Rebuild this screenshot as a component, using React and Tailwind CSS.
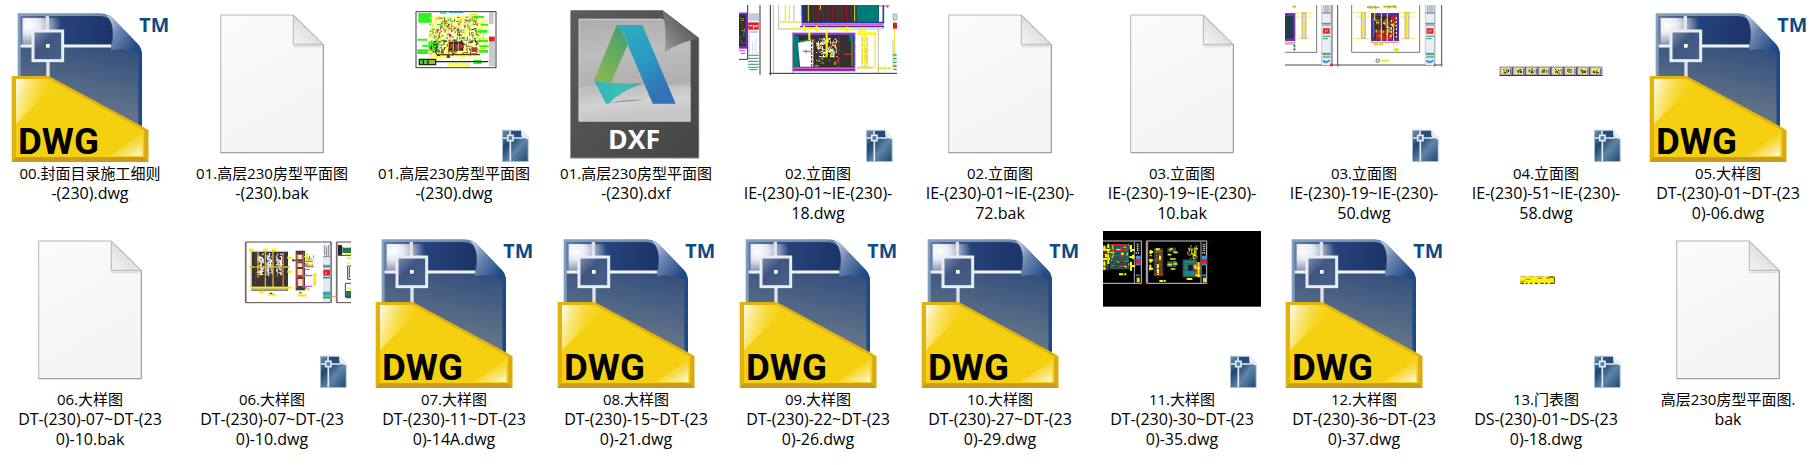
import clsx from "clsx";

const files = [
  { icon: "dwg", lines: ["00.封面目录施工细则", "-(230).dwg"] },
  { icon: "bak", lines: ["01.高层230房型平面图", "-(230).bak"] },
  { icon: "plan", lines: ["01.高层230房型平面图", "-(230).dwg"] },
  { icon: "dxf", lines: ["01.高层230房型平面图", "-(230).dxf"] },
  { icon: "elevationA", lines: ["02.立面图", "IE-(230)-01~IE-(230)-", "18.dwg"] },
  { icon: "bak", lines: ["02.立面图", "IE-(230)-01~IE-(230)-", "72.bak"] },
  { icon: "bak", lines: ["03.立面图", "IE-(230)-19~IE-(230)-", "10.bak"] },
  { icon: "elevationB", lines: ["03.立面图", "IE-(230)-19~IE-(230)-", "50.dwg"] },
  { icon: "strip", lines: ["04.立面图", "IE-(230)-51~IE-(230)-", "58.dwg"] },
  { icon: "dwg", lines: ["05.大样图", "DT-(230)-01~DT-(23", "0)-06.dwg"] },
  { icon: "bak", lines: ["06.大样图", "DT-(230)-07~DT-(23", "0)-10.bak"] },
  { icon: "detail", lines: ["06.大样图", "DT-(230)-07~DT-(23", "0)-10.dwg"] },
  { icon: "dwg", lines: ["07.大样图", "DT-(230)-11~DT-(23", "0)-14A.dwg"] },
  { icon: "dwg", lines: ["08.大样图", "DT-(230)-15~DT-(23", "0)-21.dwg"] },
  { icon: "dwg", lines: ["09.大样图", "DT-(230)-22~DT-(23", "0)-26.dwg"] },
  { icon: "dwg", lines: ["10.大样图", "DT-(230)-27~DT-(23", "0)-29.dwg"] },
  { icon: "dark", lines: ["11.大样图", "DT-(230)-30~DT-(23", "0)-35.dwg"] },
  { icon: "dwg", lines: ["12.大样图", "DT-(230)-36~DT-(23", "0)-37.dwg"] },
  { icon: "doors", lines: ["13.门表图", "DS-(230)-01~DS-(23", "0)-18.dwg"] },
  { icon: "bak", lines: ["高层230房型平面图.", "bak"] },
];

// Gradients shared by all the icons
function IconDefs() {
  return (
    <svg className="absolute h-0 w-0" aria-hidden="true">
      <defs>
        <linearGradient id="body" x1="0.6" y1="0" x2="0.4" y2="1">
          <stop offset="0" stopColor="#1f3b72" />
          <stop offset="0.3" stopColor="#3b557f" />
          <stop offset="0.75" stopColor="#5f7188" />
          <stop offset="1" stopColor="#6e7e90" />
        </linearGradient>
        <linearGradient id="rim" x1="0" y1="0" x2="1" y2="0.3">
          <stop offset="0" stopColor="#84a0bf" />
          <stop offset="0.6" stopColor="#6f8fb5" />
          <stop offset="1" stopColor="#1b4a84" />
        </linearGradient>
        <linearGradient id="topBand" x1="0" y1="0" x2="1" y2="0">
          <stop offset="0" stopColor="#6c7fa6" />
          <stop offset="0.45" stopColor="#26427a" />
          <stop offset="1" stopColor="#1b3468" />
        </linearGradient>
        <radialGradient id="glow">
          <stop offset="0" stopColor="#fff" />
          <stop offset="0.35" stopColor="#fff" stopOpacity="0.85" />
          <stop offset="1" stopColor="#fff" stopOpacity="0" />
        </radialGradient>
        <linearGradient id="target" x1="0" y1="0" x2="1" y2="1">
          <stop offset="0" stopColor="#7f8eb0" />
          <stop offset="0.4" stopColor="#3f5682" />
          <stop offset="1" stopColor="#4a6188" />
        </linearGradient>
        <linearGradient id="curl" x1="0" y1="0.2" x2="0.8" y2="0.8">
          <stop offset="0" stopColor="#b9c4da" />
          <stop offset="0.4" stopColor="#6a83ae" />
          <stop offset="1" stopColor="#214b85" />
        </linearGradient>
        <linearGradient id="shineLeft" x1="0" y1="0" x2="1" y2="0.35">
          <stop offset="0" stopColor="#fff" stopOpacity="0.95" />
          <stop offset="0.5" stopColor="#fdf0a0" stopOpacity="0.4" />
          <stop offset="1" stopColor="#f4d010" stopOpacity="0" />
        </linearGradient>
        <linearGradient id="shineRight" x1="1" y1="1" x2="0.3" y2="0.1">
          <stop offset="0" stopColor="#fff" stopOpacity="0.95" />
          <stop offset="1" stopColor="#f4d010" stopOpacity="0" />
        </linearGradient>
        <linearGradient id="paper" x1="0" y1="0" x2="0.4" y2="1">
          <stop offset="0" stopColor="#fbfbfc" />
          <stop offset="1" stopColor="#f3f4f6" />
        </linearGradient>
        <linearGradient id="paperFold" x1="0" y1="1" x2="0.6" y2="0.4">
          <stop offset="0" stopColor="#f4f4f4" />
          <stop offset="1" stopColor="#dcdcdc" />
        </linearGradient>
        <linearGradient id="frame" x1="0" y1="0" x2="1" y2="1">
          <stop offset="0" stopColor="#5c5c5c" />
          <stop offset="1" stopColor="#454545" />
        </linearGradient>
        <linearGradient id="panel" x1="0" y1="0" x2="0.1" y2="1">
          <stop offset="0" stopColor="#adadad" />
          <stop offset="0.35" stopColor="#bdbdbd" />
          <stop offset="0.7" stopColor="#b0b0b0" />
          <stop offset="0.85" stopColor="#d0d0d0" />
          <stop offset="1" stopColor="#bcbcbc" />
        </linearGradient>
        <linearGradient id="dxfFold" x1="0" y1="1" x2="0.7" y2="0.4">
          <stop offset="0" stopColor="#a0a0a0" />
          <stop offset="0.5" stopColor="#7c7c7c" />
          <stop offset="1" stopColor="#606060" />
        </linearGradient>
        <linearGradient id="legRight" x1="0" y1="0" x2="0.5" y2="1">
          <stop offset="0" stopColor="#2bb0c0" />
          <stop offset="0.5" stopColor="#2a9cc4" />
          <stop offset="1" stopColor="#3470b4" />
        </linearGradient>
        <linearGradient id="legLeft" x1="1" y1="0" x2="0.3" y2="1">
          <stop offset="0" stopColor="#3f9a78" />
          <stop offset="0.5" stopColor="#64ac62" />
          <stop offset="1" stopColor="#8ab450" />
        </linearGradient>
        <linearGradient id="legFoot" x1="0" y1="0" x2="1" y2="0">
          <stop offset="0" stopColor="#36b0b4" />
          <stop offset="0.5" stopColor="#3cc0b8" />
          <stop offset="1" stopColor="#5a9c98" />
        </linearGradient>
        <linearGradient id="badge" x1="0" y1="0" x2="1" y2="1">
          <stop offset="0" stopColor="#6f90ae" />
          <stop offset="0.3" stopColor="#1d4674" />
          <stop offset="0.6" stopColor="#6184a6" />
          <stop offset="1" stopColor="#1d4a7a" />
        </linearGradient>
      </defs>
    </svg>
  );
}

function Canvas({ origin = "0 0", children }) {
  return (
    <svg viewBox={`${origin} 480 477`} className="h-[159px] w-40" aria-hidden="true">
      {children}
    </svg>
  );
}

// Scattered marks that read as dense CAD line work at thumbnail size
function Specks({ x, y, w, h, n, colors, seed = 1, max = 12, min = 3 }) {
  let s = seed * 7919;
  const next = () => {
    s = (s * 16807) % 2147483647;
    return s / 2147483647;
  };
  next();
  return Array.from({ length: n }, (_, i) => {
    const long = min + next() * (max - min);
    const flat = next() > 0.5;
    return (
      <rect
        key={i}
        x={Math.round(x + next() * (w - (flat ? long : 3)))}
        y={Math.round(y + next() * (h - (flat ? 3 : long)))}
        width={flat ? Math.round(long) : 3}
        height={flat ? 3 : Math.round(long)}
        fill={colors[i % colors.length]}
      />
    );
  });
}

function Badge({ x, y }) {
  return (
    <g transform={`translate(${x} ${y})`}>
      <path d="M0 0H58L80 24V97H0Z" fill="#a9bccd" />
      <path d="M3 4H57L77 28V94H3Z" fill="url(#badge)" />
      <path d="M28 5H56L60 24H28Z" fill="#234d7b" />
      <path d="M58 0Q56 20 62 26Q72 26 80 30V24Z" fill="#e8eef3" />
      <path d="M24 4V16M25 34V94M3 25H15M34 25H62" stroke="#e4ecf3" strokeWidth="5" />
      <rect x="17" y="17" width="16" height="16" fill="#5b7da1" stroke="#e4ecf3" strokeWidth="5" />
    </g>
  );
}

function DwgIcon() {
  return (
    <Canvas origin="30 12">
      <path d="M53 40H300Q328 40 344 60L414 133Q426 146 426 170V400H53Z" fill="url(#rim)" />
      <path d="M62 49H300Q324 49 340 66L405 138Q416 150 416 172V390H62Z" fill="url(#body)" />
      <path d="M62 49H300Q350 62 332 133H62Z" fill="url(#topBand)" />
      <clipPath id="glowClip">
        <path d="M68 54H230V230H68Z" />
      </clipPath>
      <ellipse cx="88" cy="76" rx="95" ry="72" fill="url(#glow)" clipPath="url(#glowClip)" />
      <path d="M416 200V390H426V170Q426 150 418 140Z" fill="#1d4b86" />
      <path d="M318 46Q350 72 333 151Q392 138 426 172Q426 146 414 133L344 60Q332 46 318 46Z" fill="url(#curl)" />
      <path d="M142 48V92M144 182V240" stroke="#dfe4ec" strokeWidth="10" />
      <path d="M62 138H96M190 138H334" stroke="#eef1f6" strokeWidth="9" />
      <rect x="99" y="93" width="89" height="89" fill="url(#target)" stroke="#e9edf4" strokeWidth="9" />
      <rect x="138" y="132" width="11" height="11" fill="#fff" />
      <path d="M35 228H146L426 379L445 390V486H35Z" fill="#e2b30c" />
      <path d="M48 237H146L433 392V472H48Z" fill="#f4d010" />
      <path d="M48 237H144L170 252L48 372Z" fill="url(#shineLeft)" />
      <path d="M330 468L427 400V468Z" fill="url(#shineRight)" />
      <path d="M35 486L48 472H433L445 486Z" fill="#c99a1e" />
      <path d="M433 392L445 390V486L433 472Z" fill="#d9aa14" />
      <text x="54" y="461" className="fill-black font-['Roboto',sans-serif] text-[110px] font-bold">
        DWG
      </text>
      <text x="418" y="95" className="fill-[#0f4a84] font-['Open_Sans',sans-serif] text-[59px] font-bold">
        TM
      </text>
    </Canvas>
  );
}

function BakIcon() {
  return (
    <Canvas origin="576 12">
      <path d="M662 45H880L970 133V458H662Z" fill="url(#paper)" stroke="#b4b4b4" strokeWidth="3" />
      <path d="M880 136L970 136L960 142H882Z" fill="#dedede" />
      <path d="M880 46V133H970Z" fill="url(#paperFold)" stroke="#b4b4b4" strokeWidth="3" />
      <path d="M970 134V458H662" fill="none" stroke="#9c9c9c" strokeWidth="3" />
    </Canvas>
  );
}

function DxfIcon() {
  return (
    <Canvas origin="588 12">
      <path d="M630 32H908L1018 115V477H630Z" fill="#3f3f3f" opacity="0.35" />
      <path d="M632 31H908L1016 113V473H632Z" fill="url(#frame)" />
      <path d="M656 56H908L992 122V365H656Z" fill="url(#panel)" />
      <path d="M656 262Q760 246 992 258V365H656Z" fill="#d4d4d4" opacity="0.4" />
      <path d="M656 56H908V60H659V362H656Z" fill="#d9d9d9" opacity="0.7" />
      <path d="M908 33Q922 100 914 156Q960 124 1018 116Z" fill="url(#dxfFold)" />
      <path d="M744 309Q800 296 852 300L780 306Z" fill="#686868" opacity="0.6" />
      <path d="M769 78Q785 80 803 134L752 250Q726 246 702 241Z" fill="url(#legLeft)" />
      <path d="M702 241Q760 254 850 250Q780 274 746 311H738Z" fill="url(#legFoot)" />
      <path d="M769 75H847L947 311H878L803 134Q792 86 769 78Z" fill="url(#legRight)" />
      <text x="744" y="447" className="fill-white font-['Open_Sans',sans-serif] text-[80px] font-bold">
        DXF
      </text>
    </Canvas>
  );
}

function PlanThumb() {
  return (
    <Canvas origin="42 12">
      <rect x="167" y="35" width="241" height="168" fill="#fff" />
      <path d="M205 45H360V58H385V92H360V110H385V150H355V172H250V180H205Z" fill="#ffff50" opacity="0.45" />
      <Specks x={195} y={42} w={185} h={135} n={110} colors={["#ffff00", "#fff04a", "#b8ff20"]} max={30} seed={3} />
      <path d="M175 39H215V68H175ZM340 48H372V54H340ZM352 90H382V98H352ZM172 116H202V122H172ZM172 148H204V162H172ZM340 180H365V192H340ZM358 136H386V142H358ZM206 126H236V152H206ZM352 120H384V126H352ZM186 134H206V140H186ZM362 72H384V77H362ZM356 150H384V158H356Z" fill="#30f020" />
      <Specks x={206} y={50} w={150} h={118} n={130} colors={["#0aa070", "#38d820", "#8c7010", "#e08020", "#fff"]} seed={8} max={13} />
      <Specks x={222} y={58} w={134} h={60} n={75} colors={["#404040", "#e04a28", "#2668b0", "#ff9030", "#c030a0"]} seed={12} max={11} />
      <Specks x={210} y={118} w={148} h={50} n={90} colors={["#303030", "#cf3520", "#2a7060", "#201818", "#8a3f20"]} seed={29} max={13} />
      <rect x="266" y="126" width="44" height="26" fill="#36291f" />
      <path d="M270 132H278V146H270ZM286 133H294V148H286ZM300 132H308V145H300ZM334 142H352V156H334Z" fill="#bd392d" />
      <path d="M280 128V150M296 128V150" stroke="#c9c4b8" strokeWidth="3" />
      <path d="M235 162H360V166H270V174H260V166H235Z" fill="#684015" />
      <path d="M268 36H310V40H268ZM240 37H260V41H240Z" fill="#38c8f0" />
      <path d="M387 37H401V72H387ZM387 110H405V198H387Z" fill="#c9c9cf" />
      <path d="M387 110H404V124H387Z" fill="#e02020" />
      <path d="M262 188H330V199H262Z" fill="#ffff40" />
      <path d="M178 178H204V194H178Z" fill="#48d030" />
      <path d="M204 178H227V194H204Z" fill="#a8b030" />
      <path d="M178 178H227V194H178ZM204 178V194M190 178V194M227 185H385" fill="none" stroke="#173010" strokeWidth="4" />
      <rect x="168" y="35" width="240" height="168" fill="none" stroke="#44313a" strokeWidth="3" />
      <Badge x={426} y={389} />
    </Canvas>
  );
}

function ElevationAThumb() {
  return (
    <Canvas origin="54 12">
      <rect x="57" y="38" width="25" height="108" fill="#7a2cc0" />
      <rect x="57" y="44" width="20" height="94" fill="#263228" />
      <Specks x={58} y={46} w={18} h={88} n={22} colors={["#908830", "#175c50", "#8d2b28"]} seed={5} />
      <path d="M57 152H75M62 160H76" stroke="#e060e0" strokeWidth="4" />
      <path d="M57 178H83V15M120 15V225" fill="none" stroke="#323232" strokeWidth="3" />
      <path d="M86 40H117V62H86ZM88 92H113V99H88Z" fill="#b9cfde" />
      <rect x="85" y="67" width="31" height="22" fill="#e01c25" />
      <path d="M89 77H97M101 75V85M106 78H113" stroke="#fff" strokeWidth="4" />
      <path d="M88 103V160M98 125V162M108 115V162" stroke="#9ec5ed" strokeWidth="2" />
      <path d="M84 166H116M84 175H116M84 184H116M84 193H116M84 202H116M88 209H112" stroke="#58a69a" strokeWidth="4" />
      <path d="M151 15V226M148 220H531" stroke="#30202a" strokeWidth="3" />
      <path d="M160 15V220M176 15V87H490V70M475 88V220M222 15V66M244 15V45M218 96V220" fill="none" stroke="#969696" strokeWidth="2" />
      <path d="M178 66H244M196 15V66M208 15V66M413 103H472M465 94V204M434 103V205M524 40V205" stroke="#f4e848" strokeWidth="4" />
      <rect x="247" y="15" width="230" height="52" fill="#343230" />
      <rect x="410" y="15" width="66" height="51" fill="#007c78" />
      <path d="M268 15V65M280 15V65M296 15V65M310 15V65M324 15V65M338 15V65M352 15V65M366 15V65M380 15V65M394 15V65" stroke="#8c1826" strokeWidth="4" />
      <path d="M265 15V65M404 15V65M301 15V30" stroke="#d7e42e" strokeWidth="3" />
      <path d="M247 15V68H490V15" fill="none" stroke="#1841b0" strokeWidth="5" />
      <path d="M244 74H490" stroke="#e256bb" strokeWidth="6" />
      <path d="M240 80H492" stroke="#4b258f" strokeWidth="4" />
      <path d="M477 18H509M503 15V24" stroke="#bc4dc5" strokeWidth="3" />
      <rect x="218" y="98" width="188" height="116" fill="#8240c4" />
      <rect x="224" y="105" width="177" height="105" fill="#313230" />
      <path d="M219 108H236V204H219ZM388 105H400V122H388Z" fill="#008078" />
      <path d="M234 128L280 118V200H240Z" fill="#fff" />
      <path d="M236 126L280 118" stroke="#2b943e" strokeWidth="4" />
      <Specks x={288} y={114} w={65} h={60} n={85} colors={["#fff", "#f5ef9a", "#e7e7dd"]} seed={17} max={13} />
      <Specks x={280} y={110} w={78} h={94} n={42} colors={["#c92a2d", "#e4e520", "#925020"]} seed={19} max={12} />
      <path d="M275 120V204M357 110V204" stroke="#b12838" strokeWidth="4" strokeDasharray="8 4" />
      <path d="M248 154H275M258 148V160" stroke="#9b55b8" strokeWidth="3" />
      <path d="M370 163H394" stroke="#ef1d25" strokeWidth="4" />
      <path d="M396 122V198" stroke="#43a927" strokeWidth="4" />
      <path d="M220 205H404" stroke="#e65bc4" strokeWidth="5" />
      <path d="M216 85H234M250 87H300M345 88H400M252 78V96M290 78V96M320 84V170M380 80V96M410 100H462M417 93H432V112M268 92V120" fill="none" stroke="#ffff00" strokeWidth="6" />
      <path d="M427 110V202M441 110V202M411 203H460M470 205H512M438 145V185" fill="none" stroke="#ead52e" strokeWidth="5" strokeDasharray="15 2" />
      <path d="M519 42H531V60H519ZM519 118V204" fill="#c4dce8" stroke="#67a8bc" strokeWidth="2" />
      <path d="M519 68H531V86H519Z" fill="#d52032" />
      <path d="M520 165H530M520 176H530M520 187H530M520 198H530M520 208H530" stroke="#349780" strokeWidth="4" />
      <Badge x={438} y={389} />
    </Canvas>
  );
}

function TitleBlock({ x }) {
  return (
    <g transform={`translate(${x} 0)`}>
      <path d="M0 15H28V195H0Z" fill="#e8eff4" />
      <path d="M5 16H24V38H5Z" fill="#a8adb5" />
      <path d="M9 17V37M14 17V37M20 17V37" stroke="#e5e7e9" strokeWidth="2" />
      <path d="M0 39H28M0 70H28M2 75H26M1 160H28" stroke="#59799b" strokeWidth="3" />
      <path d="M1 82H28V103H1Z" fill="#d9d9df" />
      <path d="M4 85H24V101H4Z" fill="#eb1d1d" />
      <path d="M11 90V97M17 89V95" stroke="#fff" strokeWidth="2" />
      <path d="M3 109H26M3 116H19M3 164H26M3 171H26" stroke="#57a994" strokeWidth="4" />
      <path d="M4 181Q12 192 24 181" fill="none" stroke="#2895e0" strokeWidth="6" />
      <path d="M0 15V195M28 15V195" stroke="#acb3b9" strokeWidth="2" />
    </g>
  );
}

function ElevationBThumb() {
  return (
    <Canvas origin="612 12">
      <path d="M615 195H1086M756 15V199M773 15V199M1064 15V199M1085 15V199" stroke="#53444d" strokeWidth="3" />
      <path d="M710 15V157H615M815 15V157H1019V15" fill="none" stroke="#777" strokeWidth="3" />
      <rect x="615" y="39" width="31" height="84" fill="#7031c0" />
      <rect x="615" y="48" width="25" height="68" fill="#243b46" />
      <path d="M615 127H646M615 132H642" stroke="#e0a0a0" strokeWidth="4" />
      <path d="M643 130V153M639 138H648M639 148H648" stroke="#388f9e" strokeWidth="3" />
      <path d="M646 38H696M646 51H696M646 114H696M820 38H865M825 51H870M818 115H870M955 38H1008M955 51H1008M955 115H1010" stroke="#f3f25d" strokeWidth="3" />
      <path d="M666 39H678V116H666ZM844 38H856V116H844ZM975 38H987V116H975Z" fill="#ecd7b9" stroke="#ae9680" strokeWidth="2" />
      <path d="M671 65V100M849 42V58M849 75V105M981 42V105" stroke="#fff000" strokeWidth="6" strokeDasharray="12 3" />
      <path d="M861 22H898M910 20H950M638 20H648M870 17L875 26M884 17L888 26M924 17L928 25M942 15L947 25" stroke="#a5bc23" strokeWidth="5" />
      <rect x="873" y="39" width="84" height="84" fill="#5d29a9" />
      <rect x="881" y="48" width="68" height="69" fill="#372a32" />
      <path d="M888 92H940V119H888ZM932 49H948V72H932Z" fill="#c82426" />
      <path d="M881 52V112" stroke="#1b8f8c" strokeWidth="4" />
      <Specks x={887} y={52} w={55} h={66} n={70} colors={["#ad2936", "#c69339", "#62501f", "#3c2024"]} seed={4} />
      <Specks x={884} y={48} w={60} h={70} n={16} colors={["#ffff30", "#e4db25"]} seed={21} />
      <path d="M904 26V126M922 25V124M941 72V145M884 35V60" stroke="#fff51b" strokeWidth="3" />
      <path d="M949 52V118M934 60V116" stroke="#e8dcf2" strokeWidth="4" strokeDasharray="6 5" />
      <path d="M872 127H956" stroke="#ef92af" strokeWidth="4" />
      <path d="M881 132H895M898 131H910M943 149H956" stroke="#e2dc19" strokeWidth="9" />
      <circle cx="893" cy="182" r="5" fill="none" stroke="#44754a" strokeWidth="3" />
      <path d="M902 182H928" stroke="#f4ef15" strokeWidth="6" />
      <TitleBlock x={725} />
      <TitleBlock x={1036} />
      <path d="M750 195H758M771 195H775M1062 195H1066M1083 195H1087" stroke="#d33" strokeWidth="7" />
      <Badge x={996} y={389} />
    </Canvas>
  );
}

function StripThumb() {
  return (
    <Canvas origin="48 12">
      <rect x="149" y="200" width="308" height="28" fill="#665263" />
      {[151, 190, 228, 266, 305, 344, 383, 421].map((x, i) => (
        <g key={x}>
          <rect x={x} y="202" width="34" height="23" fill="#d3ccd1" />
          <rect x={x + 5} y="205" width="23" height="17" fill={i % 3 === 2 ? "#e0ed90" : "#f0ed65"} />
          <Specks x={x + 7} y={206} w={20} h={15} n={11} seed={i + 6} max={9} colors={["#45502d", "#38431f", "#aab735"]} />
          <path d={`M${x + 31} 206V222`} stroke="#51519a" strokeWidth="3" />
        </g>
      ))}
      <path d="M149 226H457" stroke="#4b174e" strokeWidth="3" />
      <Badge x={432} y={389} />
    </Canvas>
  );
}

function DetailThumb() {
  return (
    <Canvas origin="576 15">
      <path d="M1053 51H1010V233H1053M737 51H993V233H737Z" fill="#fff" stroke="#5d444c" strokeWidth="3" />
      <path d="M737 51V233M993 51V233M1010 51V233" stroke="#76706a" strokeWidth="5" />
      <rect x="754" y="80" width="110" height="117" fill="#343537" />
      {[770, 798, 827].map((x, i) => (
        <Specks key={x} x={x} y={84} w={23} h={70} n={46} seed={i + 31} max={13} colors={["#fff", "#eeeeec", "#d7d8d4"]} />
      ))}
      <path d="M754 76V196M774 80V158M796 74V185M819 74V190M849 83V195M748 126H870M752 187H870" stroke="#e4b629" strokeWidth="4" />
      <path d="M767 81V187M848 81V187M764 156H859" stroke="#a62a26" strokeWidth="3" strokeDasharray="6 4" />
      <path d="M747 75H762M789 74H803M815 74H830M754 189H862M776 201H790M804 209H828M862 98H877M862 140H877M862 188H877" stroke="#fff000" strokeWidth="7" />
      <path d="M755 193H863" stroke="#aaa29d" strokeWidth="5" />
      <rect x="887" y="77" width="28" height="119" fill="#443b3b" />
      <path d="M891 89H907V103H891ZM891 115H907V126H891ZM891 132H908V150H891ZM894 162H909V183H894Z" fill="#f7dfc2" />
      <path d="M891 86V188M910 85V189M889 110H914M889 153H914" fill="none" stroke="#dd4d35" strokeWidth="4" />
      <Specks x={910} y={78} w={34} h={64} n={28} colors={["#fff000", "#d6e900", "#8b8c35"]} seed={25} max={20} />
      <path d="M914 109H938M912 124H935M908 154L922 150M909 184H937M918 185V192M922 152H937" stroke="#c25abf" strokeWidth="4" />
      <path d="M944 145V183M894 211H919M919 192H930M943 149H950" stroke="#f3e600" strokeWidth="7" />
      <path d="M878 106H890M879 101V110M898 203H905M809 205H817" stroke="#4a4733" strokeWidth="4" />
      <path d="M969 58H991V231H969Z" fill="#e1ebef" />
      <path d="M974 61V90M980 65V94M986 60V94M969 95H991M969 121H991" stroke="#828b94" strokeWidth="3" />
      <rect x="970" y="134" width="20" height="18" fill="#ed1d29" />
      <path d="M978 141V148" stroke="#fff" strokeWidth="2" />
      <path d="M969 125H991M969 158H991M969 218H991" stroke="#4b8aac" strokeWidth="5" />
      <path d="M969 200H991V211H969Z" fill="#28a6cf" />
      <path d="M969 213H991" stroke="#56cc32" strokeWidth="5" />
      <path d="M993 214H1010" stroke="#d49b54" strokeWidth="3" />
      <path d="M1014 60H1026V91H1014Z" fill="#252b2a" />
      <path d="M1027 66H1053V84H1027ZM1037 198H1053V220H1037Z" fill="#2c7554" />
      <path d="M1015 91H1053M1053 123H1043V163H1053M1053 175H1036V216H1053M1048 127V158" fill="none" stroke="#444" strokeWidth="3" />
      <path d="M1030 67H1052M1038 88H1053M1041 99H1053M1043 190H1053M1045 110V116" stroke="#e6e929" strokeWidth="4" />
      <Badge x={960} y={392} />
    </Canvas>
  );
}

function DarkThumb() {
  return (
    <Canvas origin="66 15">
      <rect x="69" y="18" width="474" height="227" fill="#000" />
      <path d="M69 48H184V175H69M199 48H380V175H199Z" fill="none" stroke="#ccc" strokeWidth="3" />
      <path d="M203 48V175M163 50V174M363 50V174" stroke="#aaa" strokeWidth="3" />
      <path d="M90 57H147V133H90Z" fill="#145e57" />
      <path d="M69 61H88V136H69ZM97 111H146V124H97Z" fill="#30413b" />
      <path d="M97 59H137V77H97ZM89 92H139M69 88H83M69 121H83M112 123H139M126 59V106" fill="none" stroke="#e91d20" strokeWidth="4" />
      <Specks x={89} y={54} w={66} h={83} n={45} colors={["#14a18b", "#c12f20", "#6d7670", "#f1ec29"]} seed={43} max={12} />
      <path d="M73 62V78M78 87V97M73 109V135M85 56V120M153 60V81M159 89V104M153 110V137M151 75H166M148 96H165M151 123H168M69 74H91M69 102H90M117 148H139M123 86H131" stroke="#ffff00" strokeWidth="6" strokeDasharray="13 3" />
      {[167, 366].map((x) => (
        <g key={x}>
          <path d={`M${x} 54H${x + 12}V79H${x}Z`} fill="#252525" />
          <path d={`M${x + 6} 57V78M${x} 84H${x + 12}`} stroke="#ddd" strokeWidth="4" strokeDasharray="4 2" />
          <path d={`M${x} 92H${x + 15}V121H${x}Z`} fill="#3d94de" />
          <path d={`M${x} 102H${x + 15}V116H${x}Z`} fill="#e91b22" />
          <path d={`M${x} 151H${x + 12}`} stroke="#267f9b" strokeWidth="6" />
          <path d={`M${x + 3} 158H${x + 12}V172H${x + 3}Z`} fill="#e8e522" />
        </g>
      ))}
      <path d="M221 70H250V154H221Z" fill="#3b3936" />
      <path d="M224 79H248M222 104H249M222 147H249M243 74V150" stroke="#a73b20" strokeWidth="4" />
      <path d="M230 72V143M239 70V124" stroke="#ad9e24" strokeWidth="3" strokeDasharray="4 5" />
      <path d="M212 75V94M212 101V113M211 119V136M208 81H219M207 106H219M207 131H219M240 92V105M234 118V150M238 168H257M227 73H240" stroke="#ffff00" strokeWidth="6" strokeDasharray="12 2" />
      <path d="M262 68H288V81H262ZM262 109H290V126H262Z" fill="#3a4947" />
      <path d="M263 89H274M280 82H293M270 102H287M262 119H276M280 117H293M272 132H286M268 75L278 70" stroke="#ddf323" strokeWidth="5" />
      <path d="M263 115H275M280 111H290" stroke="#1baa90" strokeWidth="4" />
      <Specks x={320} y={60} w={35} h={43} n={33} colors={["#ffff00", "#e9db0e", "#7a8d46"]} seed={15} max={13} />
      <path d="M308 103H352V157H308Z" fill="#46534f" />
      <path d="M313 108H346V115H313ZM313 137H343V153H313ZM314 117H322V135H314Z" fill="#088e87" />
      <path d="M325 120H338V137H325Z" fill="#071c4c" />
      <path d="M339 121L354 137M351 112V145M340 145H350" stroke="#e64d23" strokeWidth="5" />
      <path d="M346 119V132M356 112V157M351 130H361M352 152H361M320 162H337M346 151H356" stroke="#fff224" strokeWidth="6" />
      <path d="M183 48H187M198 48H202M183 175H187M198 175H202M378 48H382M378 175H382" stroke="#f22" strokeWidth="5" />
      <Badge x={450} y={392} />
    </Canvas>
  );
}

function DoorsThumb() {
  return (
    <Canvas origin="48 15">
      <rect x="211" y="154" width="104" height="21" fill="#fff100" />
      <path d="M211 154H229M237 154H252M257 154H281M284 157H314" stroke="#c5c67e" strokeWidth="4" />
      <path d="M289 160H298M301 156H312M227 163H242M211 169H224M263 160H276" stroke="#a88322" strokeWidth="3" />
      <path d="M211 175H222M227 175H233M240 175H247M254 175H264M271 175H281M285 175H293M299 175H313" stroke="#484818" strokeWidth="4" />
      <path d="M313 156V174M295 156H309" stroke="#4a4825" strokeWidth="3" />
      <Badge x={432} y={392} />
    </Canvas>
  );
}

const icons = {
  dwg: DwgIcon,
  bak: BakIcon,
  dxf: DxfIcon,
  plan: PlanThumb,
  elevationA: ElevationAThumb,
  elevationB: ElevationBThumb,
  strip: StripThumb,
  detail: DetailThumb,
  dark: DarkThumb,
  doors: DoorsThumb,
};

function FileItem({ file }) {
  const Icon = icons[file.icon];
  return (
    <li className="flex flex-col items-center">
      <Icon />
      <p className="text-center leading-5 whitespace-nowrap">
        {file.lines.map((line, i) => (
          <span key={line} className={clsx("block", i === 0 ? "text-[15px]/5" : "text-base/5")}>
            {line}
          </span>
        ))}
      </p>
    </li>
  );
}

export default function App() {
  return (
    <main className="overflow-hidden bg-white pt-1 font-['Open_Sans','Noto_Sans_CJK_SC',sans-serif] text-black">
      <IconDefs />
      <ul className="-mr-0.5 -ml-px grid grid-cols-10 gap-y-[7px]">
        {files.map((file) => (
          <FileItem key={file.lines.join("")} file={file} />
        ))}
      </ul>
    </main>
  );
}
